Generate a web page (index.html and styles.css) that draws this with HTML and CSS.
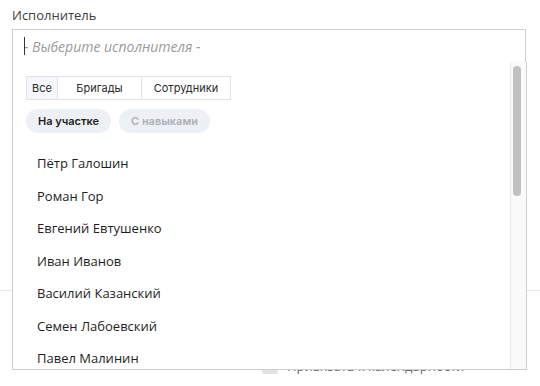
FILE: index.html
```html
<!DOCTYPE html>
<html lang="ru">
<head>
  <meta charset="UTF-8">
  <meta name="viewport" content="width=device-width, initial-scale=1.0">
  <title>Исполнитель</title>
  <link rel="stylesheet" href="styles.css">
</head>
<body>
  <form class="task-form">
    <div class="field">
      <label class="field-label" for="executor">Исполнитель</label>
      <div class="select-input" id="executor">
        <span class="caret"></span><span class="placeholder">- Выберите исполнителя -</span>
      </div>

      <!-- Выпадающий список -->
      <div class="dropdown">
        <div class="dropdown-list">
          <div class="tabs">
            <button type="button" class="tab tab-all active">Все</button>
            <button type="button" class="tab tab-teams">Бригады</button>
            <button type="button" class="tab tab-staff">Сотрудники</button>
          </div>
          <div class="pills">
            <button type="button" class="pill active">На участке</button>
            <button type="button" class="pill">С навыками</button>
          </div>
          <ul class="people">
            <li>Пётр Галошин</li>
            <li>Роман Гор</li>
            <li>Евгений Евтушенко</li>
            <li>Иван Иванов</li>
            <li>Василий Казанский</li>
            <li>Семен Лабоевский</li>
            <li>Павел Малинин</li>
          </ul>
        </div>
        <div class="scrollbar">
          <div class="scroll-thumb"></div>
        </div>
      </div>
    </div>

    <hr class="divider">

    <div class="check-row">
      <span class="checkbox"></span>
      <span class="check-text">Привязать к календарности</span>
    </div>
  </form>
</body>
</html>
```

FILE: styles.css
```css
* {
  margin: 0;
  padding: 0;
  box-sizing: border-box;
}

body {
  font-family: 'Open Sans', 'Noto Sans', sans-serif;
  background-color: #ffffff;
  color: #222;
  width: 540px;
  height: 386px;
  overflow: hidden;
}

.task-form {
  padding: 0 14px 0 12px;
}

.field {
  position: relative;
}

.field-label {
  display: block;
  font-size: 13px;
  line-height: 18px;
  color: #404040;
  padding-top: 6px;
  margin-bottom: 5px;
}

.select-input {
  height: 34px;
  border: 1px solid #cfcfcf;
  padding: 0 11px;
  display: flex;
  align-items: center;
  font-size: 14px;
}

.caret {
  display: inline-block;
  width: 1px;
  height: 18px;
  background-color: #333;
  margin-right: -1px;
  position: relative;
  z-index: 1;
}

.placeholder {
  font-style: italic;
  color: #9a9a9a;
}

/* Выпадающий список поверх формы */
.dropdown {
  position: absolute;
  top: 62px;
  left: 0;
  width: 515px;
  height: 308px;
  display: flex;
  background-color: #ffffff;
  border: 1px solid #cfcfcf;
  border-top: none;
  z-index: 10;
}

.dropdown-list {
  flex: 1;
  overflow: hidden;
  padding: 14px 0 0 13px;
}

.scrollbar {
  width: 16px;
  background-color: #fafafa;
  border-left: 1px solid #e6e6e6;
  padding: 4px 0 0 2px;
}

.scroll-thumb {
  width: 8px;
  height: 130px;
  border-radius: 4px;
  background-color: #c1c1c1;
}

.tabs {
  display: flex;
  font-family: 'Inter', 'Noto Sans', sans-serif;
}

.tab {
  height: 24px;
  font-family: inherit;
  font-size: 11px;
  color: #2b2b2b;
  background-color: #ffffff;
  border: 1px solid #dfe3e8;
  margin-left: -1px;
}

.tab:first-child {
  margin-left: 0;
}

.tab.active {
  background-color: #f5f7fa;
}

.tab-all {
  width: 32px;
}

.tab-teams {
  width: 85px;
}

.tab-staff {
  width: 90px;
}

.pills {
  display: flex;
  gap: 8px;
  margin-top: 9px;
}

.pill {
  height: 24px;
  padding: 0 12px;
  border: none;
  border-radius: 12px;
  background-color: #edf0f4;
  font-family: 'Inter', 'Noto Sans', sans-serif;
  font-size: 11px;
  font-weight: 600;
  color: #acb1b9;
}

.pill.active {
  color: #1f1f1f;
}

.people {
  list-style: none;
  margin-top: 14px;
}

.people li {
  height: 32.5px;
  line-height: 32.5px;
  padding-left: 11px;
  font-size: 13px;
  color: #1e1e1e;
}

.divider {
  border: none;
  border-top: 1px solid #e6e6e6;
  margin: 227px -14px 0 -12px;
}

.check-row {
  display: flex;
  align-items: center;
  gap: 9px;
  margin-top: 66px;
  padding-left: 250px;
}

.checkbox {
  width: 16px;
  height: 16px;
  border-radius: 3px;
  background-color: #e3e3e3;
}

.check-text {
  font-size: 13px;
  color: #666;
}
```
